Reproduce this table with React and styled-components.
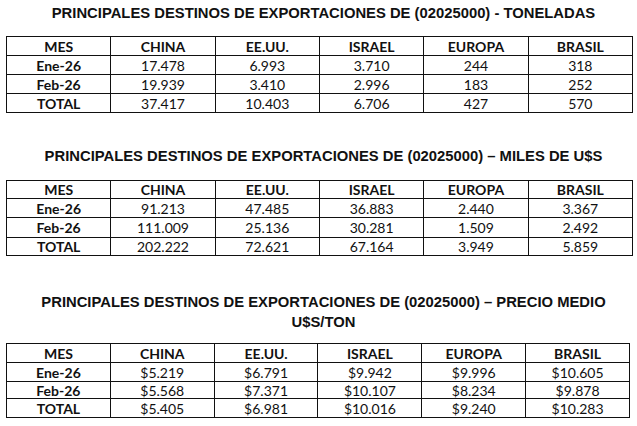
import React from "react";
import styled, { createGlobalStyle } from "styled-components";

const Global = createGlobalStyle`
  html, body { margin: 0; padding: 0; background: #ffffff; }
  body { width: 637px; height: 426px; overflow: hidden; }
`;

const Page = styled.div`
  display: flex;
  flex-direction: column;
  padding: 5px 0 0 6px;
  width: 637px;
  box-sizing: border-box;
`;

const Title = styled.h2`
  margin: ${(p) => p.$mt || 0}px 0 ${(p) => p.$mb || 0}px 0;
  padding-left: 8px;
  width: 627px;
  box-sizing: border-box;
  font-family: "Liberation Sans", Arial, sans-serif;
  font-weight: 700;
  font-size: 14.8px;
  line-height: ${(p) => p.$lh || 17}px;
  color: #111;
  text-align: center;
  white-space: nowrap;
`;

const Table = styled.table`
  border-collapse: collapse;
  table-layout: fixed;
  width: ${(p) => p.$w || 627}px;
  font-family: Lato, "Open Sans", sans-serif;
  font-size: 14px;
  color: #111;
`;

const Cell = styled.td`
  border: 1px solid #111;
  height: ${(p) => p.$h || 18}px;
  padding: 1px 0 0 0;
  box-sizing: border-box;
  text-align: center;
  vertical-align: middle;
  line-height: 14px;
  font-weight: ${(p) => (p.$bold ? 700 : 400)};
  white-space: nowrap;
`;

const heads = ["MES", "CHINA", "EE.UU.", "ISRAEL", "EUROPA", "BRASIL"];

const DataTable = ({ rows, width, heights }) => (
  <Table $w={width}>
    <tbody>
      <tr>
        {heads.map((h) => (
          <Cell key={h} $bold $h={heights[0]}>
            {h}
          </Cell>
        ))}
      </tr>
      {rows.map((r, i) => (
        <tr key={r[0]}>
          {r.map((v, j) => (
            <Cell key={j} $bold={j === 0} $h={heights[i + 1]}>
              {v}
            </Cell>
          ))}
        </tr>
      ))}
    </tbody>
  </Table>
);

const t1 = [
  ["Ene-26", "17.478", "6.993", "3.710", "244", "318"],
  ["Feb-26", "19.939", "3.410", "2.996", "183", "252"],
  ["TOTAL", "37.417", "10.403", "6.706", "427", "570"],
];
const t2 = [
  ["Ene-26", "91.213", "47.485", "36.883", "2.440", "3.367"],
  ["Feb-26", "111.009", "25.136", "30.281", "1.509", "2.492"],
  ["TOTAL", "202.222", "72.621", "67.164", "3.949", "5.859"],
];
const t3 = [
  ["Ene-26", "$5.219", "$6.791", "$9.942", "$9.996", "$10.605"],
  ["Feb-26", "$5.568", "$7.371", "$10.107", "$8.234", "$9.878"],
  ["TOTAL", "$5.405", "$6.981", "$10.016", "$9.240", "$10.283"],
];

export default function App() {
  return (
    <>
      <Global />
      <Page>
        <Title $mb={14}>
          PRINCIPALES DESTINOS DE EXPORTACIONES DE (02025000) - TONELADAS
        </Title>
        <DataTable rows={t1} heights={[19, 19, 19, 19]} />
        <Title $mt={35} $mb={15}>
          PRINCIPALES DESTINOS DE EXPORTACIONES DE (02025000) – MILES DE U$S
        </Title>
        <DataTable rows={t2} heights={[18, 19, 20, 18]} />
        <Title $mt={36} $mb={11} $lh={20}>
          PRINCIPALES DESTINOS DE EXPORTACIONES DE (02025000) – PRECIO MEDIO
          <br />
          U$S/TON
        </Title>
        <DataTable rows={t3} width={624} heights={[19, 19, 17, 19]} />
      </Page>
    </>
  );
}
